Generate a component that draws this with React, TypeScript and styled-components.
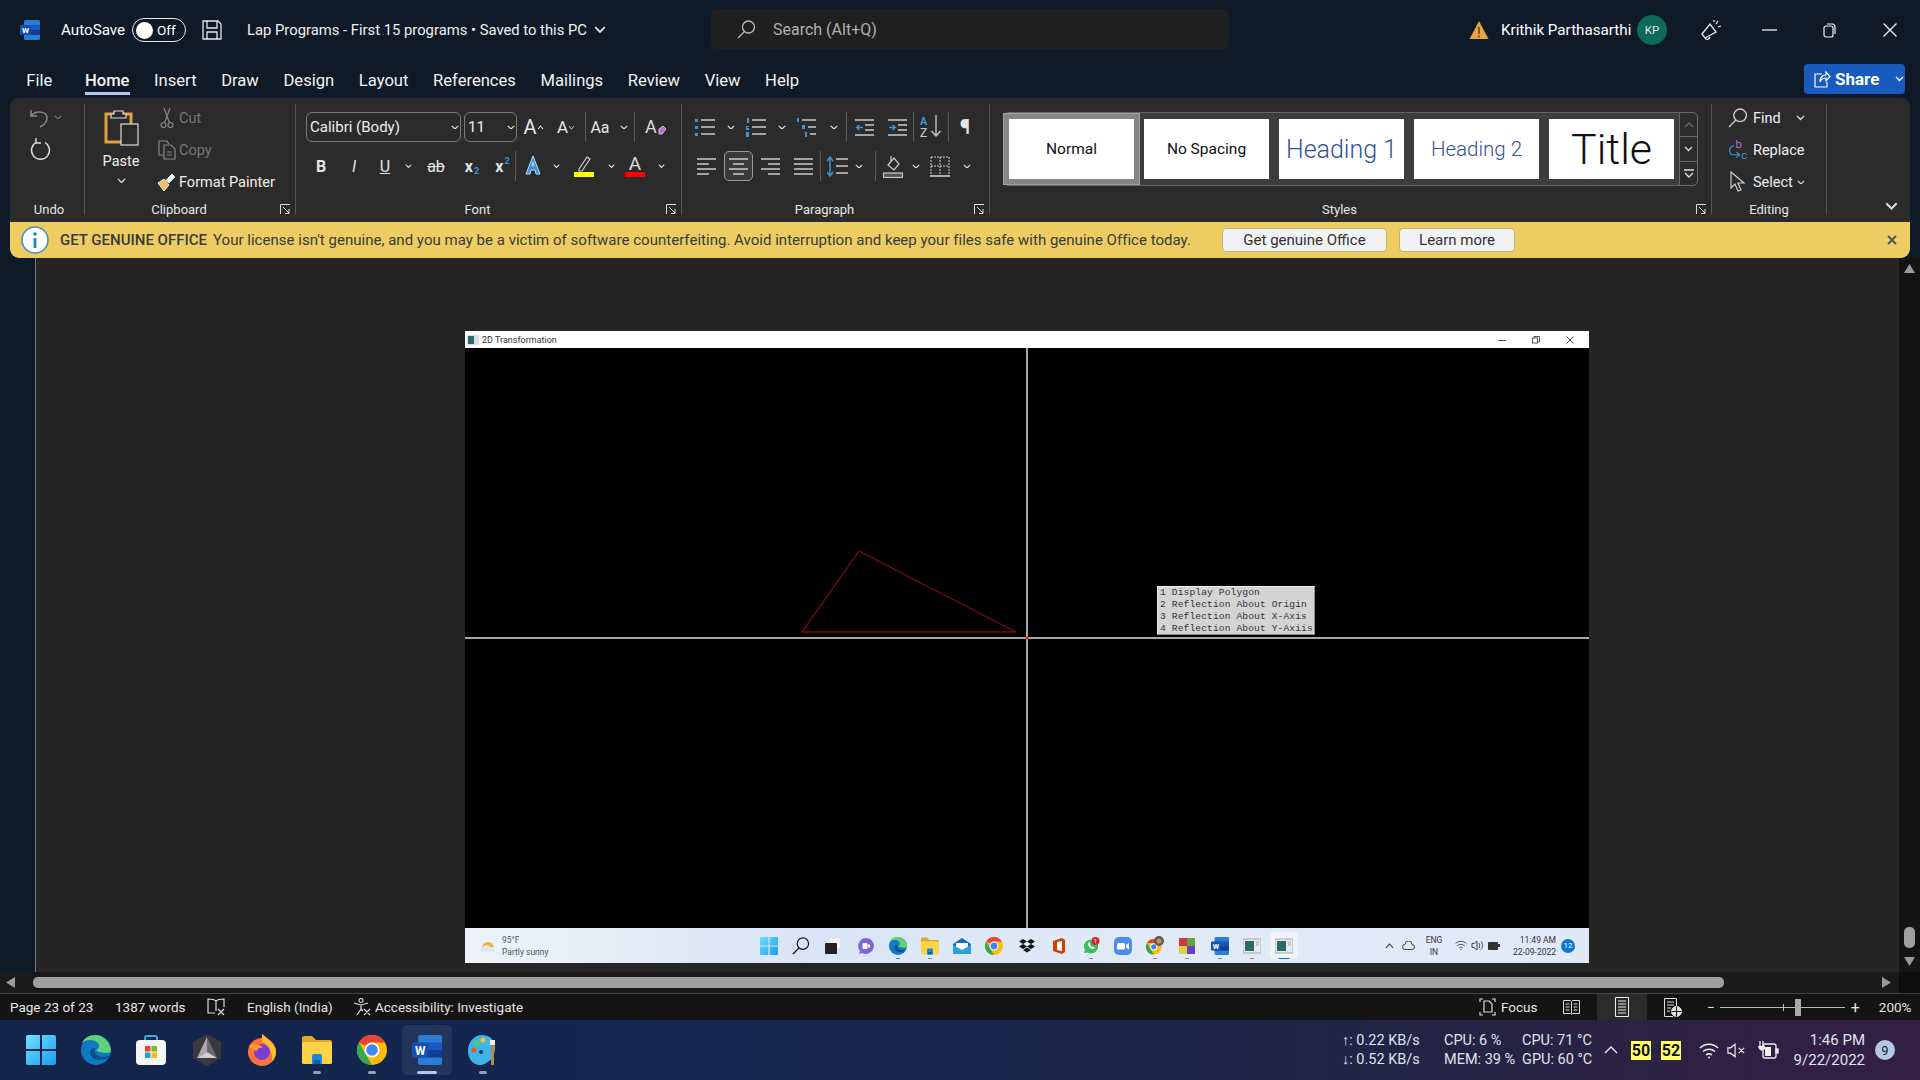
import React from "react";
import styled, { createGlobalStyle } from "styled-components";

const GlobalStyle = createGlobalStyle`
  html, body {
    margin: 0;
    padding: 0;
    width: 1920px;
    height: 1080px;
    overflow: hidden;
    background: #0f1a29;
    font-family: Roboto, "Noto Sans", sans-serif;
  }
  * { box-sizing: border-box; }
`;

const Screen = styled.div`
  width: 1920px;
  height: 1080px;
  display: flex;
  flex-direction: column;
  color: #fff;
`;
const Spacer = styled.span<{ $w: number }>`
  width: ${(p) => p.$w}px;
  flex: none;
  display: flex;
`;

const TitleBar = styled.div`
  height: 60px;
  display: flex;
  align-items: center;
  padding-left: 20px;
  flex: none;
`;
const AutoSave = styled.span`
  font-size: 15.2px;
  margin-left: 21px;
  width: 71px;
`;
const Toggle = styled.div`
  width: 54px;
  height: 24px;
  border: 1.5px solid #e8e8e8;
  border-radius: 12px;
  display: flex;
  align-items: center;
  padding-left: 3px;
  gap: 4px;
  font-size: 13.5px;
  &::before {
    content: "";
    width: 17px;
    height: 17px;
    border-radius: 50%;
    background: #fff;
  }
`;
const DocTitle = styled.span`
  font-size: 14.8px;
  margin-left: 25px;
  width: 364px;
  color: #f0f0f0;
  white-space: nowrap;
  display: flex;
  align-items: center;
  gap: 7px;
`;
const SearchBox = styled.div`
  width: 518px;
  height: 40px;
  margin-left: 100px;
  margin-top: -2px;
  background: #1f1f1f;
  border-radius: 6px;
  display: flex;
  align-items: center;
  padding-left: 26px;
  gap: 17px;
  font-size: 16px;
  color: #b0b0b0;
`;
const TitleRight = styled.div`
  margin-left: 240px;
  display: flex;
  align-items: center;
  flex: 1;
`;
const UserName = styled.span`
  font-size: 15.2px;
  margin-left: 12px;
  width: 136px;
`;
const Avatar = styled.span`
  width: 30px;
  height: 30px;
  border-radius: 50%;
  background: #0b6a58;
  display: flex;
  align-items: center;
  justify-content: center;
  font-size: 11.5px;
  color: #e6e6e6;
`;

const TabBar = styled.div`
  height: 38px;
  flex: none;
  display: flex;
  align-items: flex-start;
  padding-left: 14px;
  position: relative;
`;
const Tab = styled.span<{ $active?: boolean; $gap?: number }>`
  font-size: 16.6px;
  padding: 11px 12.3px 0;
  height: 38px;
  line-height: 20px;
  margin-right: ${(p) => p.$gap || 0}px;
  font-weight: ${(p) => (p.$active ? 500 : 400)};
  color: #f2f2f2;
  position: relative;
  &::after {
    content: "";
    display: ${(p) => (p.$active ? "block" : "none")};
    position: absolute;
    left: 12px;
    right: 12px;
    bottom: 3px;
    height: 3px;
    background: #b4c7e7;
  }
`;
const ShareButton = styled.div`
  position: absolute;
  left: 1804px;
  top: 4px;
  width: 101px;
  height: 30px;
  background: #185abd;
  border-radius: 4px;
  display: flex;
  align-items: center;
  padding-left: 10px;
  gap: 4px;
  font-size: 17px;
  font-weight: 700;
`;

const Ribbon = styled.div`
  margin-left: 10px;
  width: 1900px;
  height: 124px;
  flex: none;
  background: #2b2b2b;
  border-radius: 9px 9px 0 0;
  display: flex;
  padding-top: 6px;
  position: relative;
`;
const Group = styled.div<{ $w: number }>`
  width: ${(p) => p.$w}px;
  height: 111px;
  flex: none;
  border-right: 1px solid #555;
  display: flex;
  flex-direction: column;
  position: relative;
`;
const GroupBody = styled.div<{ $pl?: number }>`
  flex: 1;
  min-height: 0;
  display: flex;
  flex-direction: column;
  padding-left: ${(p) => p.$pl || 0}px;
`;
const GroupLabel = styled.div<{ $pr?: number; $pl?: number }>`
  height: 22px;
  flex: none;
  margin-bottom: -7px;
  line-height: 20px;
  text-align: center;
  font-size: 13px;
  color: #e6e6e6;
  padding: 0 ${(p) => p.$pr || 0}px 0 ${(p) => p.$pl || 0}px;
`;
const Launcher = styled.span`
  position: absolute;
  right: 4px;
  bottom: 0;
  width: 11px;
  height: 11px;
  display: flex;
`;
const ToolRow = styled.div<{ $top: number }>`
  display: flex;
  align-items: center;
  height: 30px;
  margin-top: ${(p) => p.$top}px;
`;
const Tool = styled.span<{
  $w: number;
  $boxed?: boolean;
  $size?: number;
  $bold?: boolean;
  $italic?: boolean;
  $line?: string;
}>`
  width: ${(p) => p.$w}px;
  height: 30px;
  flex: none;
  display: flex;
  align-items: center;
  justify-content: center;
  font-size: ${(p) => p.$size || 16}px;
  font-weight: ${(p) => (p.$bold ? 700 : 400)};
  font-style: ${(p) => (p.$italic ? "italic" : "normal")};
  text-decoration: ${(p) => p.$line || "none"};
  color: #e4e4e4;
  border-radius: 5px;
  border: ${(p) => (p.$boxed ? "1px solid #9a9a9a" : "none")};
  background: ${(p) => (p.$boxed ? "#3a3a3a" : "none")};
`;
const Script = styled.span<{ $up?: boolean }>`
  font-size: 9px;
  color: #3f93d8;
  align-self: ${(p) => (p.$up ? "flex-start" : "flex-end")};
  margin: ${(p) => (p.$up ? "5px" : "0")} 0 ${(p) => (p.$up ? "0" : "5px")} 1px;
`;
const ToolSep = styled.span`
  width: 1px;
  height: 30px;
  background: #5a5a5a;
  flex: none;
`;
const FontBox = styled.div<{ $w: number }>`
  width: ${(p) => p.$w}px;
  height: 30px;
  flex: none;
  border: 1px solid #7a7a7a;
  border-radius: 6px;
  margin-right: 3px;
  display: flex;
  align-items: center;
  justify-content: space-between;
  padding: 0 1px 0 3px;
  font-size: 15px;
  color: #eee;
`;
const UndoColumn = styled.div`
  display: flex;
  flex-direction: column;
  padding: 2px 0 0 20px;
  gap: 9px;
`;
const UndoRow = styled.div`
  display: flex;
  align-items: center;
  gap: 4px;
  height: 22px;
`;
const ClipboardBody = styled.div`
  flex: 1;
  min-height: 0;
  display: flex;
`;
const PasteColumn = styled.div`
  width: 72px;
  display: flex;
  flex-direction: column;
  align-items: center;
  padding: 4px 0 0 0;
  font-size: 14.5px;
  color: #f0f0f0;
`;
const PasteLabel = styled.span`
  margin-top: 5px;
  line-height: 20px;
`;
const PasteChevron = styled.span`
  margin-top: 6px;
  display: flex;
`;
const ClipColumn = styled.div`
  display: flex;
  flex-direction: column;
  margin-top: -2px;
`;
const ClipItem = styled.div<{ $off?: boolean }>`
  display: flex;
  align-items: center;
  height: 32px;
  flex: none;
  font-size: 14.5px;
  color: ${(p) => (p.$off ? "#777" : "#f0f0f0")};
  & > svg {
    width: 20px;
    margin-right: 2px;
    flex: none;
  }
`;
const Gallery = styled.div`
  margin: 8px 0 0 13px;
  width: 695px;
  height: 74px;
  border: 1px solid #666;
  border-radius: 5px;
  background: #3d3d3d;
  display: flex;
  padding: 6px 0 0 5px;
  position: relative;
`;
const StyleCard = styled.div<{
  $size: number;
  $color?: string;
  $light?: boolean;
  $focus?: boolean;
}>`
  width: 125px;
  height: 60px;
  flex: none;
  margin-right: 10px;
  background: #fff;
  display: flex;
  align-items: center;
  justify-content: center;
  font-size: ${(p) => p.$size}px;
  font-weight: ${(p) => (p.$light ? 300 : 400)};
  color: ${(p) => p.$color || "#111"};
  outline: ${(p) => (p.$focus ? "5px solid #868686" : "none")};
  box-shadow: ${(p) => (p.$focus ? "0 0 0 6px #a0a0a0" : "none")};
`;
const Scroller = styled.div`
  position: absolute;
  right: 0;
  top: 0;
  bottom: 0;
  width: 18px;
  background: #2b2b2b;
  border-left: 1px solid #666;
  border-radius: 0 5px 5px 0;
  display: flex;
  flex-direction: column;
`;
const ScrollCell = styled.span`
  flex: 1;
  display: flex;
  align-items: center;
  justify-content: center;
  & + & {
    border-top: 1px solid #666;
  }
`;
const EditColumn = styled.div`
  flex: 1;
  min-height: 0;
  display: flex;
  flex-direction: column;
  margin-top: -2px;
  padding-left: 16px;
`;
const EditItem = styled.div`
  height: 32px;
  flex: none;
  display: flex;
  align-items: center;
  font-size: 14.5px;
  color: #f0f0f0;
  & > svg:first-child {
    width: 20px;
    margin-right: 5px;
    flex: none;
  }
`;
const EditChevron = styled.span<{ $gap: number }>`
  margin-left: ${(p) => p.$gap}px;
  display: flex;
`;
const CollapseButton = styled.span`
  position: absolute;
  right: 12px;
  bottom: 12px;
  display: flex;
`;

const InfoBar = styled.div`
  margin-left: 10px;
  width: 1900px;
  height: 36px;
  flex: none;
  background: #edcd62;
  border-radius: 0 0 9px 9px;
  display: flex;
  align-items: center;
  padding-left: 11px;
  font-size: 15px;
  color: #3a3a3a;
  position: relative;
  z-index: 1;
`;
const InfoBold = styled.b`
  font-weight: 500;
  margin-left: 11px;
  width: 153px;
  flex: none;
  white-space: nowrap;
`;
const InfoText = styled.span`
  width: 1009px;
  flex: none;
  white-space: nowrap;
  letter-spacing: 0.02px;
`;
const InfoButton = styled.span<{ $w: number }>`
  width: ${(p) => p.$w}px;
  height: 24px;
  flex: none;
  margin-right: 12px;
  background: #f2f2f2;
  border: 1px solid #c2b27a;
  border-radius: 4px;
  display: flex;
  align-items: center;
  justify-content: center;
  font-size: 15px;
  color: #333;
`;
const InfoClose = styled.span`
  position: absolute;
  right: 13px;
  top: 13px;
  display: flex;
`;

const Workspace = styled.div`
  height: 714px;
  flex: none;
  display: flex;
`;
const LeftGutter = styled.div`
  width: 36px;
  flex: none;
  border-right: 1px solid #7a7a7a;
`;
const DocArea = styled.div`
  width: 1863px;
  flex: none;
  background: #252525;
  padding: 73px 0 0 429px;
`;
const VScroll = styled.div`
  flex: 1;
  background: #141414;
  position: relative;
  display: flex;
  flex-direction: column;
  align-items: center;
  padding-top: 6px;
`;
const VThumb = styled.span`
  position: absolute;
  left: 5px;
  top: 669px;
  width: 11px;
  height: 21px;
  background: #a0a0a0;
  border-radius: 5px;
`;
const VDown = styled.span`
  position: absolute;
  left: 5px;
  top: 699px;
  display: flex;
`;

const Shot = styled.div`
  width: 1124px;
  height: 632px;
  display: flex;
  flex-direction: column;
`;
const ShotTitle = styled.div`
  height: 17px;
  background: #fff;
  color: #333;
  font-size: 9px;
  display: flex;
  align-items: center;
  padding-left: 2px;
  gap: 3px;
`;
const ShotControls = styled.span`
  margin-left: auto;
  display: flex;
  gap: 26px;
  padding-right: 15px;
`;
const Canvas = styled.div`
  flex: 1;
  background: #000;
  position: relative;
`;
const AxisV = styled.span`
  position: absolute;
  left: 561px;
  top: 0;
  bottom: 0;
  width: 1.5px;
  background: #a8a8a8;
`;
const AxisH = styled.span`
  position: absolute;
  left: 0;
  right: 0;
  top: 289px;
  height: 1.5px;
  background: #a8a8a8;
`;
const Plot = styled.svg`
  position: absolute;
  left: 0;
  top: 0;
`;
const GlutMenu = styled.div`
  position: absolute;
  left: 692px;
  top: 238px;
  width: 158px;
  height: 49px;
  background: #d4d4d4;
  border: 1px solid #eee;
  border-right-color: #888;
  border-bottom-color: #888;
  padding: 0 2px;
  font-family: "Liberation Mono", monospace;
  font-size: 9.6px;
  line-height: 12px;
  letter-spacing: 0.12px;
  color: #333;
  white-space: pre;
`;
const ShotTaskbar = styled.div`
  height: 35px;
  flex: none;
  background: linear-gradient(90deg, #eef3f9, #d9e5f6 30%, #e1eaf7 60%, #dfe9f8);
  display: flex;
  align-items: center;
  position: relative;
  color: #333;
  font-size: 8.5px;
`;
const Weather = styled.div`
  width: 290px;
  flex: none;
  display: flex;
  align-items: center;
  padding-left: 15px;
  gap: 6px;
`;
const WeatherText = styled.div`
  line-height: 12px;
  color: #555;
`;
const ShotIcons = styled.div`
  display: flex;
  width: 627px;
  flex: none;
`;
const ShotIcon = styled.span<{ $active?: boolean; $run?: boolean }>`
  width: 28px;
  height: 27px;
  margin-right: 4.2px;
  flex: none;
  display: flex;
  align-items: center;
  justify-content: center;
  border-radius: 3px;
  position: relative;
  background: ${(p) => (p.$active ? "#f0f4fa" : "none")};
  & > svg {
    width: 18px;
    height: 18px;
  }
  &::after {
    content: "";
    display: ${(p) => (p.$run || p.$active ? "block" : "none")};
    position: absolute;
    bottom: 0;
    left: 50%;
    transform: translateX(-50%);
    width: ${(p) => (p.$active ? 11 : 4)}px;
    height: 1.5px;
    background: ${(p) => (p.$active ? "#0a78d4" : "#888")};
  }
`;
const Tray = styled.div`
  flex: 1;
  display: flex;
  align-items: center;
  padding-left: 3px;
`;
const TrayLang = styled.span`
  text-align: center;
  line-height: 12px;
  width: 30px;
  margin: 0 6px 0 4px;
`;
const TrayClock = styled.span`
  width: 56px;
  text-align: right;
  line-height: 12px;
`;
const TrayBadge = styled.span`
  width: 14px;
  height: 14px;
  border-radius: 50%;
  background: #0a78d4;
  color: #fff;
  font-size: 8px;
  display: flex;
  align-items: center;
  justify-content: center;
  margin-left: 5px;
`;

const HScroll = styled.div`
  height: 21px;
  flex: none;
  background: #1a1a1a;
  display: flex;
  align-items: center;
  padding-left: 6px;
`;
const HThumb = styled.span`
  width: 1691px;
  height: 11px;
  margin-left: 18px;
  background: #a0a0a0;
  border-radius: 5px;
`;
const HRightArrow = styled.span`
  margin-left: 158px;
  display: flex;
`;
const ScrollCorner = styled.span`
  margin-left: auto;
  width: 21px;
  height: 21px;
  background: #0d0d0d;
`;

const StatusBar = styled.div`
  height: 27px;
  flex: none;
  background: #141414;
  border-top: 1px solid #444;
  display: flex;
  align-items: center;
  padding-left: 10px;
  font-size: 13.5px;
  color: #e4e4e4;
  white-space: nowrap;
`;
const StatusText = styled.span<{ $w: number }>`
  width: ${(p) => p.$w}px;
  flex: none;
`;
const StatusIcon = styled.span<{ $w: number; $active?: boolean }>`
  width: ${(p) => p.$w}px;
  height: 26px;
  flex: none;
  display: flex;
  align-items: center;
  justify-content: center;
  background: ${(p) => (p.$active ? "#2b2b2b" : "none")};
`;
const ZoomSlider = styled.span`
  width: 125px;
  height: 1px;
  background: #bbb;
  position: relative;
  flex: none;
  margin: 0 6px 0 5px;
`;
const ZoomTick = styled.span`
  position: absolute;
  left: 63px;
  top: -3px;
  width: 1px;
  height: 7px;
  background: #bbb;
`;
const ZoomThumb = styled.span`
  position: absolute;
  left: 75px;
  top: -8px;
  width: 6px;
  height: 17px;
  background: #a8a8a8;
`;
const ZoomPlus = styled.span`
  font-size: 16px;
`;
const ZoomValue = styled.span`
  margin-left: 19px;
`;

const Taskbar = styled.div`
  height: 60px;
  flex: none;
  background: linear-gradient(90deg, #13254a 0%, #142650 30%, #1b2548 60%, #2b2244 85%, #341f45 100%);
  display: flex;
  align-items: center;
  padding-left: 16px;
  font-size: 14.5px;
  color: #dfe3ea;
`;
const PinnedApps = styled.div`
  display: flex;
  width: 1326px;
  flex: none;
`;
const TaskApp = styled.span<{ $active?: boolean; $run?: boolean }>`
  width: 50px;
  height: 50px;
  margin-right: 5.2px;
  flex: none;
  display: flex;
  align-items: center;
  justify-content: center;
  border-radius: 5px;
  position: relative;
  background: ${(p) => (p.$active ? "rgba(255,255,255,0.07)" : "none")};
  &::after {
    content: "";
    display: ${(p) => (p.$run || p.$active ? "block" : "none")};
    position: absolute;
    bottom: 1px;
    left: 50%;
    transform: translateX(-50%);
    width: ${(p) => (p.$active ? 20 : 8)}px;
    height: 3.5px;
    border-radius: 2px;
    background: ${(p) => (p.$active ? "#b4c7e7" : "#9aa1ae")};
  }
`;
const MeterBlock = styled.div<{ $w: number }>`
  width: ${(p) => p.$w}px;
  flex: none;
  line-height: 19.5px;
  white-space: nowrap;
`;
const Caret = styled.span`
  margin-right: 13px;
  display: flex;
`;
const Temp = styled.span`
  width: 20px;
  height: 19px;
  background: #ffff66;
  color: #111;
  font-size: 16px;
  font-weight: 700;
  display: flex;
  align-items: center;
  justify-content: center;
  margin-right: 10px;
  flex: none;
`;
const ClockBlock = styled.div`
  width: 100px;
  margin-left: -26px;
  flex: none;
  text-align: right;
  line-height: 20px;
  font-size: 15px;
`;
const NotifyBadge = styled.span`
  width: 20px;
  height: 20px;
  border-radius: 50%;
  background: #b4c7e7;
  color: #223;
  font-size: 13px;
  display: flex;
  align-items: center;
  justify-content: center;
  margin-left: 10px;
  flex: none;
`;
const TrayIconSlot = styled.span<{ $w: number }>`
  width: ${(p) => p.$w}px;
  display: flex;
  justify-content: center;
  flex: none;
`;

/* little drawings */
const Chevron = ({ s = 8, c = "#e0e0e0" }: { s?: number; c?: string }) => (
  <svg width={s} height={s * 0.6} viewBox="0 0 10 6" fill="none">
    <path d="M1 1l4 4 4-4" stroke={c} strokeWidth="1.5" />
  </svg>
);

const SizeCaret = ({ down }: { down?: boolean }) => (
  <svg width="7" height="5" viewBox="0 0 7 5" fill="none" stroke={down ? "#7fb4e0" : "#ddd"} strokeWidth="1.1">
    <path d={down ? "M1 1l2.5 3L6 1" : "M1 4l2.5-3L6 4"} />
  </svg>
);

const LauncherIcon = () => (
  <svg width="11" height="11" viewBox="0 0 11 11" fill="none" stroke="#ddd">
    <path d="M.5 10V.5H10M3 3l6 6M9 5v4.5H5" />
  </svg>
);

const WordLogo = ({ s = 20 }: { s?: number }) => (
  <svg width={s} height={s} viewBox="0 0 20 20">
    <rect x="4" width="16" height="20" rx="1.5" fill="#2b7cd3" />
    <rect x="4" y="5" width="16" height="5" fill="#185abd" />
    <rect x="4" y="10" width="16" height="5" fill="#103f91" />
    <rect x="0" y="5" width="11" height="10" rx="1" fill="#1551b5" />
    <text x="5.5" y="13" fontSize="8" fontWeight="700" fill="#fff" textAnchor="middle" fontFamily="Roboto">W</text>
  </svg>
);

const SaveIcon = () => (
  <svg width="20" height="20" viewBox="0 0 20 20" fill="none" stroke="#e6e6e6" strokeWidth="1.3">
    <path d="M1 1h15l3 3v15H1zM5 1v7h10V1M5 19v-7h10v7" />
  </svg>
);

const SearchGlyph = ({ c = "#bbb", s = 19 }: { c?: string; s?: number }) => (
  <svg width={s} height={s} viewBox="0 0 19 19" fill="none" stroke={c} strokeWidth="1.3">
    <circle cx="11.5" cy="7" r="6" />
    <path d="M7.5 11.5L1 18" />
  </svg>
);

const Warning = () => (
  <svg width="20" height="20" viewBox="0 0 20 20">
    <path d="M10 1l9.5 18H.5z" fill="#e8a33d" />
    <path d="M10 7v7M10 15.5v2" stroke="#5a3a10" strokeWidth="1.4" />
  </svg>
);

const Megaphone = () => (
  <svg width="21" height="22" viewBox="0 0 21 22" fill="none" stroke="#eee" strokeWidth="1.3">
    <path d="M1 15l8-10 6 8-11 6zM4 19c1 2 4 2 5-1M15 5l2-3M17 8l3-1M13 3l0-2" />
  </svg>
);

const MinimizeIcon = () => (
  <svg width="15" height="2" viewBox="0 0 15 2">
    <path d="M0 1h15" stroke="#eee" strokeWidth="1.3" />
  </svg>
);
const RestoreIcon = () => (
  <svg width="13" height="15" viewBox="0 0 13 15" fill="none" stroke="#eee" strokeWidth="1.2">
    <rect x="1" y="3" width="9" height="11" rx="2" />
    <path d="M4 1h5a3 3 0 0 1 3 3v7" />
  </svg>
);
const CloseIcon = () => (
  <svg width="14" height="14" viewBox="0 0 14 14" stroke="#eee" strokeWidth="1.3">
    <path d="M.5.5l13 13M13.5.5l-13 13" />
  </svg>
);

const ShareIcon = () => (
  <svg width="17" height="18" viewBox="0 0 17 18" fill="none" stroke="#fff" strokeWidth="1.2">
    <path d="M8 4H1v13h12v-5M6 12c0-5 3-7 6-7V2l4 4.5L12 11V8c-3 0-5 1-6 4z" />
  </svg>
);

const UndoIcon = () => (
  <svg width="20" height="21" viewBox="0 0 20 21" fill="none" stroke="#888" strokeWidth="1.5">
    <path d="M1 3v6h6M1 9c5-6 16-5 16 2 0 4-3 7-7 9" />
  </svg>
);
const RedoIcon = () => (
  <svg width="21" height="23" viewBox="0 0 21 23" fill="none" stroke="#ddd" strokeWidth="1.4">
    <path d="M6 1v5h5M6 5.500A9 9 0 1 0 15 5.500" />
  </svg>
);

const PasteIcon = () => (
  <svg width="35" height="39" viewBox="0 0 35 39" fill="none">
    <path d="M2 6h25v28H2z" stroke="#e0a040" strokeWidth="3" />
    <path d="M10 6V3h9v3h3v4H7V6z" fill="#2b2b2b" stroke="#ddd" strokeWidth="1.2" />
    <rect x="17" y="16" width="17" height="21" fill="#2b2b2b" stroke="#ddd" strokeWidth="1.2" />
  </svg>
);
const CutIcon = () => (
  <svg width="14" height="22" viewBox="0 0 14 22" fill="none" stroke="#888" strokeWidth="1.2">
    <circle cx="3.5" cy="18" r="2.5" />
    <circle cx="10.5" cy="18" r="2.5" />
    <path d="M4.5 16L10 1M9.5 16L4 1" />
  </svg>
);
const CopyIcon = () => (
  <svg width="18" height="20" viewBox="0 0 18 20" fill="none" stroke="#888" strokeWidth="1.2">
    <path d="M5 15H1V1h8l2 3M6 5h7l4 4v10H6zM9 12h5M9 15h5" />
  </svg>
);
const BrushIcon = () => (
  <svg width="20" height="20" viewBox="0 0 20 20" fill="none">
    <path d="M1 11l6-4 5 6-5 6z" fill="#f0c060" stroke="#eee" />
    <path d="M9 8l6-6 3 3-6 6z" fill="#f4f4f4" stroke="#ddd" />
  </svg>
);

const ClearFormat = () => (
  <svg width="21" height="24" viewBox="0 0 21 24" fill="none" overflow="visible">
    <text x="0" y="18" fontSize="18" fill="#ddd" fontFamily="Roboto">A</text>
    <path d="M14 14l4-3 3 3-4 5h-3z" fill="#c070c8" stroke="#e0b0e8" />
  </svg>
);

const BulletLines = ({ kind }: { kind: "dot" | "num" | "multi" }) => (
  <svg width="20" height="20" viewBox="0 0 20 20" fill="none">
    {kind === "dot" && <path d="M0 2h3v3H0zM0 9h3v3H0zM0 16h3v3H0z" fill="#3f93d8" />}
    {kind === "num" && <path d="M1 1h2v5H1zM0 9h3v1H1v1h2v2H0zM0 15h3v5H0z" fill="#3f93d8" />}
    {kind === "multi" && <path d="M0 1h2v4H0zM5 8h3v4H5zM8 15h2v5H8z" fill="#3f93d8" />}
    <path
      d={kind === "multi" ? "M5 3h14M11 10h8M13 17h6" : "M6 3h14M6 10h14M6 17h14"}
      stroke="#ccc"
      strokeWidth="1.6"
    />
  </svg>
);
const IndentIcon = ({ inward }: { inward?: boolean }) => (
  <svg width="19" height="19" viewBox="0 0 19 19" fill="none">
    <path d="M0 2h19M10 7h9M10 12h9M0 17h19" stroke="#ccc" strokeWidth="1.6" />
    <path d={inward ? "M1 9.500h6M4.500 7l3 2.500-3 2.500" : "M8 9.500H2M4.500 7l-3 2.500 3 2.500"} stroke="#3f93d8" strokeWidth="1.5" />
  </svg>
);
const SortIcon = () => (
  <svg width="22" height="26" viewBox="0 0 22 26" fill="none" overflow="visible">
    <text x="0" y="11" fontSize="11" fontWeight="700" fill="#3f93d8" fontFamily="Roboto">A</text>
    <text x="0" y="23" fontSize="12" fill="#ccc" fontFamily="Roboto">Z</text>
    <path d="M16 1v21M11.500 17l4.500 5 4.500-5" stroke="#ccc" strokeWidth="1.3" />
  </svg>
);
const AlignIcon = ({ mode }: { mode: "l" | "c" | "r" | "j" }) => {
  const paths = {
    l: "M0 2h19M0 7h12M0 12h19M0 17h12",
    c: "M0 2h19M4 7h11M0 12h19M4 17h11",
    r: "M0 2h19M7 7h12M0 12h19M7 17h12",
    j: "M0 2h19M0 7h19M0 12h19M0 17h19",
  };
  return (
    <svg width="19" height="19" viewBox="0 0 19 19" fill="none">
      <path d={paths[mode]} stroke="#ccc" strokeWidth="1.6" />
    </svg>
  );
};
const SpacingIcon = () => (
  <svg width="21" height="21" viewBox="0 0 21 21" fill="none">
    <path d="M3 1v19M0 5l3-4 3 4M0 16l3 4 3-4" stroke="#3f93d8" strokeWidth="1.5" />
    <path d="M9 3h12M9 10h12M9 17h12" stroke="#ccc" strokeWidth="1.6" />
  </svg>
);
const ShadingIcon = () => (
  <svg width="20" height="23" viewBox="0 0 20 23" fill="none" stroke="#ccc" strokeWidth="1.2">
    <path d="M5 10l6-7 5 6-5 6zM8 1v5" />
    <rect x="0.5" y="18" width="19" height="4.5" fill="#555" />
  </svg>
);
const BordersIcon = () => (
  <svg width="20" height="21" viewBox="0 0 20 21" fill="none" stroke="#ccc" strokeDasharray="2 1">
    <path d="M1 1h18v19M1 1v19M10 1v19M1 10h18" />
    <path d="M0 20h20" strokeDasharray="none" strokeWidth="1.6" />
  </svg>
);
const FontColorA = ({ bar, outline }: { bar?: string; outline?: boolean }) => (
  <svg width="20" height="24" viewBox="0 0 20 24" overflow="visible">
    {outline ? (
      <path d="M3 20L10 2l7 18h-4l-1-4H8l-1 4zM9 12h2l-1-4z" fill="#3c8ed8" stroke="#bcdcf4" strokeWidth="1" />
    ) : (
      <text x="10" y="16" fontSize="19" fill="#ddd" textAnchor="middle" fontFamily="Roboto">A</text>
    )}
    {bar && <rect x="0" y="18" width="20" height="5" fill={bar} />}
  </svg>
);
const HighlightIcon = () => (
  <svg width="20" height="24" viewBox="0 0 20 24" fill="none">
    <path d="M5 15l8-12 3 2-8 12-3 0z" stroke="#ccc" strokeWidth="1.2" />
    <rect x="0" y="18" width="20" height="5" fill="#ffff00" />
  </svg>
);
const ReplaceIcon = () => (
  <svg width="21" height="24" viewBox="0 0 21 24" fill="none" overflow="visible">
    <text x="8" y="10" fontSize="12" fill="#b870c8" fontFamily="Roboto">b</text>
    <text x="14" y="21" fontSize="12" fill="#3f93d8" fontFamily="Roboto">c</text>
    <path d="M6 8C1 8 0 16 5 17h7M9 14l3 3-3 3" stroke="#3f93d8" strokeWidth="1.2" />
  </svg>
);
const CursorIcon = () => (
  <svg width="20" height="22" viewBox="0 0 20 22" fill="none">
    <path d="M3 1v16l4-4 3 7 3-1-3-7h6z" stroke="#ccc" strokeWidth="1.2" />
  </svg>
);

const BookCross = () => (
  <svg width="19" height="18" viewBox="0 0 19 18" fill="none" stroke="#ddd" strokeWidth="1.2">
    <path d="M9 3C7 1 3 1 1 1v14h7M9 3c2-2 5-2 8-2v8M9 3v10M11 11l6 6M17 11l-6 6" />
  </svg>
);
const AccessIcon = () => (
  <svg width="19" height="18" viewBox="0 0 19 18" fill="none" stroke="#ddd" strokeWidth="1.2">
    <circle cx="8" cy="2.500" r="2" />
    <path d="M1 5l7 2 7-2M8 7v4l-4 6M8 11l2 2M11 11l6 6M17 11l-6 6" />
  </svg>
);
const FocusIcon = () => (
  <svg width="17" height="18" viewBox="0 0 17 18" fill="none" stroke="#ddd" strokeWidth="1.2">
    <path d="M1 4V1h3M13 1h3v3M16 14v3h-3M4 17H1v-3M5 14V3h5l3 3v8z" />
  </svg>
);
const ReadIcon = () => (
  <svg width="17" height="16" viewBox="0 0 17 16" fill="none" stroke="#ddd">
    <path d="M.5 1.500h7l1 1 1-1h7v13h-7l-1 1-1-1h-7zM8.500 2.500v12M2.500 5h4M2.500 8h4M2.500 11h4M10.500 5h4M10.500 8h4M10.500 11h4" />
  </svg>
);
const PrintIcon = () => (
  <svg width="14" height="20" viewBox="0 0 14 20" fill="none" stroke="#eee">
    <path d="M.5.5h13v19H.5zM3 4h8M3 7h8M3 10h8M3 13h8M3 16h8" />
  </svg>
);
const WebIcon = () => (
  <svg width="18" height="19" viewBox="0 0 18 19" fill="none" stroke="#ddd">
    <path d="M9 18.500H.5V.5h12v8M3 4h7M3 7h7M3 10h4M3 13h3" />
    <circle cx="12.500" cy="13.500" r="5" fill="#ddd" />
    <path d="M7.500 13.500h10M12.500 8.500v10" stroke="#141414" />
  </svg>
);

/* taskbar logos */
const WinLogo = ({ s = 30 }: { s?: number }) => (
  <svg width={s} height={s} viewBox="0 0 30 30">
    <defs>
      <linearGradient id="winl" x1="0" y1="0" x2="1" y2="1">
        <stop offset="0" stopColor="#6fe0ff" />
        <stop offset="1" stopColor="#1a9df0" />
      </linearGradient>
    </defs>
    <path d="M0 2a2 2 0 0 1 2-2h12v14H0zM16 0h12a2 2 0 0 1 2 2v12H16zM0 16h14v14H2a2 2 0 0 1-2-2zM16 16h14v12a2 2 0 0 1-2 2H16z" fill="url(#winl)" />
  </svg>
);
const EdgeLogo = ({ s = 30 }: { s?: number }) => (
  <svg width={s} height={s} viewBox="0 0 30 30">
    <circle cx="15" cy="15" r="15" fill="#0f79c4" />
    <path d="M30 17C30 6 21 0 14 0 8 0 3 3 1 8c4-4 12-4 16 0 2 3 1 6-2 7 4 4 15 3 15 2z" fill="#5ed17a" />
    <path d="M9 17c0 4 4 8 9 8 5 0 9-2 11-5-3 2-9 3-13 0-3-2-3-5-1-7-3 0-6 1-6 4z" fill="#0a4f8a" />
  </svg>
);
const StoreLogo = ({ s = 30 }: { s?: number }) => (
  <svg width={s} height={s} viewBox="0 0 30 30">
    <path d="M9 7V3a2 2 0 0 1 2-2h8a2 2 0 0 1 2 2v4" fill="none" stroke="#2bb3e8" strokeWidth="2" />
    <rect y="5" width="30" height="25" rx="4" fill="#f5f5f5" />
    <rect x="9" y="11" width="5.500" height="5.500" fill="#e8472b" />
    <rect x="15.500" y="11" width="5.500" height="5.500" fill="#7cbb30" />
    <rect x="9" y="17.500" width="5.500" height="5.500" fill="#1aa2e8" />
    <rect x="15.500" y="17.500" width="5.500" height="5.500" fill="#fbbb10" />
  </svg>
);
const HexLogo = () => (
  <svg width="28" height="32" viewBox="0 0 28 32">
    <path d="M14 0l14 8v16l-14 8L0 24V8z" fill="#3a3a3e" />
    <path d="M14 3L4 24l10-6z" fill="#a8a8ae" />
    <path d="M14 3l10 21-10-6z" fill="#6a6a70" />
    <path d="M4 24h20l-10-6z" fill="#cfcfd4" />
  </svg>
);
const FoxLogo = () => (
  <svg width="30" height="32" viewBox="0 0 30 32">
    <circle cx="15" cy="18" r="14" fill="#ff7139" />
    <path d="M15 0c5 4 14 10 14 18 0 4-2 8-4 9 1-8-3-16-10-19z" fill="#ffbd2e" />
    <circle cx="15" cy="18" r="8" fill="#7a3fd0" />
    <path d="M2 12c4-3 12-2 14 2-4-1-6 1-6 3l-4-1z" fill="#ff9a2e" />
  </svg>
);
const FolderLogo = ({ s = 30 }: { s?: number }) => (
  <svg width={s} height={s} viewBox="0 0 30 30">
    <path d="M0 3a2 2 0 0 1 2-2h8l4 4h14a2 2 0 0 1 2 2v3H0z" fill="#e0a82a" />
    <rect y="7" width="30" height="22" rx="1.5" fill="#fdd247" />
    <path d="M10 29v-8a2 2 0 0 1 2-2h6a2 2 0 0 1 2 2v8z" fill="#1a8ad4" />
    <rect x="12" y="25" width="6" height="4" fill="#0c5ea8" />
  </svg>
);
const ChromeLogo = ({ s = 30 }: { s?: number }) => (
  <svg width={s} height={s} viewBox="0 0 30 30">
    <circle cx="15" cy="15" r="15" fill="#fbbc05" />
    <path d="M15 0a15 15 0 0 1 13 7.500H15A7.500 7.500 0 0 0 8.500 11L2 7.500A15 15 0 0 1 15 0z" fill="#ea4335" />
    <path d="M2 7.500L8.500 19 15 30A15 15 0 0 1 2 7.500z" fill="#34a853" />
    <circle cx="15" cy="15" r="7.500" fill="#fff" />
    <circle cx="15" cy="15" r="5.800" fill="#4285f4" />
  </svg>
);
const PaletteLogo = () => (
  <svg width="30" height="32" viewBox="0 0 30 32">
    <path d="M14 1c8 0 14 6 13 15-1 8-8 15-15 15C5 31 0 25 0 17 0 8 6 1 14 1z" fill="#3fb4e8" />
    <circle cx="9" cy="9" r="2.500" fill="#6bc44f" />
    <circle cx="15" cy="6" r="2.500" fill="#f5c32c" />
    <circle cx="6" cy="16" r="2.500" fill="#e8562c" />
    <circle cx="13" cy="18" r="2" fill="#16405e" />
    <path d="M22 10h5l-1 7v14h-3V17z" fill="#b08a4a" />
    <path d="M22 6h5v5h-5z" fill="#eee" />
  </svg>
);

const ChatLogo = () => (
  <svg viewBox="0 0 18 18">
    <path d="M9 1a8 8 0 1 1-4 15l-3 1 1-3A8 8 0 0 1 9 1z" fill="#7b68d8" />
    <rect x="5.500" y="6" width="5" height="6" rx="1" fill="#fff" />
    <path d="M11 8l2-1v4l-2-1z" fill="#fff" />
  </svg>
);
const TaskView = () => (
  <svg viewBox="0 0 18 18">
    <rect x="5" y="1" width="12" height="11" rx="1" fill="#f4f4f4" stroke="#ddd" />
    <rect x="1" y="6" width="12" height="11" rx="1" fill="#222" />
  </svg>
);
const MailLogo = () => (
  <svg viewBox="0 0 18 18">
    <path d="M9 1l9 6v10H0V7z" fill="#0f6cbd" />
    <path d="M3 6h12v5l-6 3-6-3z" fill="#fff" />
    <path d="M0 8l9 5 9-5v9H0z" fill="#2b9fe0" />
  </svg>
);
const DropboxLogo = () => (
  <svg viewBox="0 0 18 18">
    <path d="M5 2l4 2.500-4 2.500-4-2.500zM13 2l4 2.500-4 2.500-4-2.500zM5 7l4 2.500L5 12 1 9.500zM13 7l4 2.500-4 2.500-4-2.500zM5 13l4-2.500 4 2.500-4 2.500z" fill="#111" />
  </svg>
);
const OfficeLogo = () => (
  <svg viewBox="0 0 18 18">
    <path d="M3 4l9-3 3 2v12l-3 2-9-3z" fill="#d83b01" />
    <path d="M7 5l5-1v10l-5-1z" fill="#fff" />
  </svg>
);
const WhatsLogo = () => (
  <svg viewBox="0 0 18 18" overflow="visible">
    <path d="M9 2a7.500 7.500 0 1 1-3.500 14L1 17l1.200-4A7.500 7.500 0 0 1 9 2z" fill="#32c15c" stroke="#fff" />
    <path d="M6 6c0 4 3 6 6 6l1-1.500-2-1-1 .5-2-2 .5-1-1-2z" fill="#fff" />
    <circle cx="13.500" cy="4" r="4" fill="#e0212f" />
    <text x="13.500" y="6.300" fontSize="6" fill="#fff" textAnchor="middle" fontFamily="Roboto">1</text>
  </svg>
);
const ZoomLogo = () => (
  <svg viewBox="0 0 18 18">
    <rect width="18" height="18" rx="5" fill="#4a8cf0" />
    <rect x="3" y="6" width="8" height="6.500" rx="1.500" fill="#fff" />
    <path d="M12 8l3-2v6.500l-3-2z" fill="#fff" />
  </svg>
);
const ColorBlocks = () => (
  <svg viewBox="0 0 18 18">
    <rect x="1" y="1" width="8" height="8" fill="#d8323a" />
    <rect x="9" y="1" width="8" height="8" fill="#5da83c" />
    <rect x="1" y="9" width="8" height="8" fill="#e0d03c" />
    <rect x="9" y="9" width="8" height="8" fill="#6a3cc0" />
  </svg>
);
const WindowThumb = () => (
  <svg viewBox="0 0 18 18">
    <rect y="2" width="18" height="14" fill="#e8ecef" stroke="#aaa" />
    <rect x="2" y="4" width="9" height="10" fill="#2a6a68" />
    <rect x="13" y="4" width="3" height="5" fill="#ccc" />
  </svg>
);
const ChromeUser = () => (
  <svg viewBox="0 0 18 18" overflow="visible">
    <g transform="translate(0 2) scale(0.52)">
      <circle cx="15" cy="15" r="15" fill="#fbbc05" />
      <path d="M15 0a15 15 0 0 1 13 7.500H15L2 7.500A15 15 0 0 1 15 0z" fill="#ea4335" />
      <path d="M2 7.500L15 30A15 15 0 0 1 2 7.500z" fill="#34a853" />
      <circle cx="15" cy="15" r="6" fill="#4285f4" stroke="#fff" strokeWidth="2" />
    </g>
    <circle cx="13" cy="4" r="5" fill="#6a5a50" />
    <circle cx="13" cy="4" r="2.500" fill="#c09070" />
  </svg>
);
const SunCloud = () => (
  <svg width="16" height="14" viewBox="0 0 16 14">
    <path d="M2 9a6 6 0 0 1 12 0z" fill="#f0b030" />
    <path d="M1 13a3 3 0 0 1 2-5 4 4 0 0 1 7 0h3a2.500 2.500 0 0 1 0 5z" fill="#dfe6ee" />
  </svg>
);
const WifiIcon = ({ c = "#eee", s = 20 }: { c?: string; s?: number }) => (
  <svg width={s} height={s * 0.85} viewBox="0 0 20 17" fill="none" stroke={c} strokeWidth="1.5">
    <path d="M1 6c5-5 13-5 18 0M4 9.500c3.500-3 8.500-3 12 0M7 13c2-1.500 4-1.500 6 0" />
    <circle cx="10" cy="15.500" r="1" fill={c} stroke="none" />
  </svg>
);
const MuteIcon = () => (
  <svg width="20" height="17" viewBox="0 0 20 17" fill="none" stroke="#eee" strokeWidth="1.3">
    <path d="M1 5.500h3l5-4v14l-5-4H1zM13 5.500l6 6M19 5.500l-6 6" />
  </svg>
);
const BatteryIcon = () => (
  <svg width="21" height="20" viewBox="0 0 21 20" fill="none" stroke="#eee" strokeWidth="1.3">
    <rect x="5" y="4" width="13" height="14" rx="2" />
    <rect x="18" y="9" width="2" height="4" fill="#eee" />
    <path d="M2 1v5M5 1v5" />
    <path d="M0 6h7v3l-3 2-3-2z" fill="#eee" stroke="none" />
    <rect x="7" y="7" width="6" height="9" fill="#eee" stroke="none" />
  </svg>
);

const menuLines = [
  "1 Display Polygon",
  "2 Reflection About Origin",
  "3 Reflection About X-Axis",
  "4 Reflection About Y-Axiis",
];

const shotIcons: { icon: React.ReactNode; run?: boolean; active?: boolean }[] = [
  { icon: <WinLogo s={18} /> },
  { icon: <SearchGlyph c="#111" s={17} /> },
  { icon: <TaskView /> },
  { icon: <ChatLogo /> },
  { icon: <EdgeLogo s={18} />, run: true },
  { icon: <FolderLogo s={18} />, run: true },
  { icon: <MailLogo /> },
  { icon: <ChromeLogo s={18} /> },
  { icon: <DropboxLogo /> },
  { icon: <OfficeLogo /> },
  { icon: <WhatsLogo />, run: true },
  { icon: <ZoomLogo /> },
  { icon: <ChromeUser />, run: true },
  { icon: <ColorBlocks />, run: true },
  { icon: <WordLogo s={18} />, run: true },
  { icon: <WindowThumb />, run: true },
  { icon: <WindowThumb />, active: true },
];

export default function App() {
  return (
    <Screen>
      <GlobalStyle />
      <TitleBar>
        <WordLogo />
        <AutoSave>AutoSave</AutoSave>
        <Toggle>Off</Toggle>
        <Spacer $w={16} />
        <SaveIcon />
        <DocTitle>
          Lap Programs - First 15 programs • Saved to this PC
          <Chevron s={12} />
        </DocTitle>
        <SearchBox>
          <SearchGlyph />
          Search (Alt+Q)
        </SearchBox>
        <TitleRight>
          <Warning />
          <UserName>Krithik Parthasarthi</UserName>
          <Avatar>KP</Avatar>
          <Spacer $w={34} />
          <Megaphone />
          <Spacer $w={40} />
          <MinimizeIcon />
          <Spacer $w={46} />
          <RestoreIcon />
          <Spacer $w={47} />
          <CloseIcon />
        </TitleRight>
      </TitleBar>

      <TabBar>
        <Tab $gap={8}>File</Tab>
        <Tab $active>Home</Tab>
        <Tab>Insert</Tab>
        <Tab>Draw</Tab>
        <Tab>Design</Tab>
        <Tab>Layout</Tab>
        <Tab>References</Tab>
        <Tab>Mailings</Tab>
        <Tab>Review</Tab>
        <Tab>View</Tab>
        <Tab>Help</Tab>
        <ShareButton>
          <ShareIcon />
          Share
          <Spacer $w={8} />
          <Chevron s={9} c="#fff" />
        </ShareButton>
      </TabBar>

      <Ribbon>
        <Group $w={75}>
          <GroupBody>
            <UndoColumn>
              <UndoRow>
                <UndoIcon />
                <Chevron s={8} c="#777" />
              </UndoRow>
              <UndoRow>
                <RedoIcon />
              </UndoRow>
            </UndoColumn>
          </GroupBody>
          <GroupLabel $pl={4}>Undo</GroupLabel>
        </Group>

        <Group $w={211}>
          <ClipboardBody>
            <PasteColumn>
              <PasteIcon />
              <PasteLabel>Paste</PasteLabel>
              <PasteChevron>
                <Chevron s={9} />
              </PasteChevron>
            </PasteColumn>
            <ClipColumn>
              <ClipItem $off>
                <CutIcon />
                Cut
              </ClipItem>
              <ClipItem $off>
                <CopyIcon />
                Copy
              </ClipItem>
              <ClipItem>
                <BrushIcon />
                Format Painter
              </ClipItem>
            </ClipColumn>
          </ClipboardBody>
          <GroupLabel $pr={22}>Clipboard</GroupLabel>
          <Launcher>
            <LauncherIcon />
          </Launcher>
        </Group>

        <Group $w={386}>
          <GroupBody $pl={10}>
            <ToolRow $top={8}>
              <FontBox $w={155}>
                Calibri (Body)
                <Chevron s={8} />
              </FontBox>
              <FontBox $w={53}>
                11
                <Chevron s={8} />
              </FontBox>
              <Tool $w={27} $size={20}>A<SizeCaret /></Tool>
              <Tool $w={38} $size={17}>A<SizeCaret down /></Tool>
              <ToolSep />
              <Tool $w={28}>Aa</Tool>
              <Tool $w={20}><Chevron s={8} /></Tool>
              <ToolSep />
              <Tool $w={40}><ClearFormat /></Tool>
            </ToolRow>
            <ToolRow $top={9}>
              <Tool $w={30} $bold>B</Tool>
              <Tool $w={36} $italic>I</Tool>
              <Tool $w={26} $line="underline">U</Tool>
              <Tool $w={20}><Chevron s={7} /></Tool>
              <Tool $w={36} $line="line-through">ab</Tool>
              <Tool $w={36} $bold>x<Script>2</Script></Tool>
              <Tool $w={25} $bold>x<Script $up>2</Script></Tool>
              <ToolSep />
              <Tool $w={34}><FontColorA outline /></Tool>
              <Tool $w={12}><Chevron s={7} /></Tool>
              <Tool $w={44}><HighlightIcon /></Tool>
              <Tool $w={10}><Chevron s={7} /></Tool>
              <Tool $w={38}><FontColorA bar="#ff0000" /></Tool>
              <Tool $w={14}><Chevron s={7} /></Tool>
            </ToolRow>
          </GroupBody>
          <GroupLabel $pr={22}>Font</GroupLabel>
          <Launcher>
            <LauncherIcon />
          </Launcher>
        </Group>

        <Group $w={308}>
          <GroupBody $pl={6}>
            <ToolRow $top={8}>
              <Tool $w={33}><BulletLines kind="dot" /></Tool>
              <Tool $w={19}><Chevron s={8} /></Tool>
              <Tool $w={32}><BulletLines kind="num" /></Tool>
              <Tool $w={19}><Chevron s={8} /></Tool>
              <Tool $w={31}><BulletLines kind="multi" /></Tool>
              <Tool $w={24}><Chevron s={8} /></Tool>
              <ToolSep />
              <Tool $w={34}><IndentIcon /></Tool>
              <Tool $w={32}><IndentIcon inward /></Tool>
              <ToolSep />
              <Tool $w={34}><SortIcon /></Tool>
              <ToolSep />
              <Tool $w={32} $size={21} $bold>¶</Tool>
            </ToolRow>
            <ToolRow $top={9}>
              <Tool $w={36}><AlignIcon mode="l" /></Tool>
              <Tool $w={29} $boxed><AlignIcon mode="c" /></Tool>
              <Tool $w={34}><AlignIcon mode="r" /></Tool>
              <Tool $w={33}><AlignIcon mode="j" /></Tool>
              <ToolSep />
              <Tool $w={32}><SpacingIcon /></Tool>
              <Tool $w={12}><Chevron s={8} /></Tool>
              <Spacer $w={10} />
              <ToolSep />
              <Tool $w={34}><ShadingIcon /></Tool>
              <Tool $w={12}><Chevron s={8} /></Tool>
              <Tool $w={36}><BordersIcon /></Tool>
              <Tool $w={18}><Chevron s={8} /></Tool>
            </ToolRow>
          </GroupBody>
          <GroupLabel $pr={22}>Paragraph</GroupLabel>
          <Launcher>
            <LauncherIcon />
          </Launcher>
        </Group>

        <Group $w={722}>
          <GroupBody>
            <Gallery>
              <StyleCard $size={15.5} $focus>Normal</StyleCard>
              <StyleCard $size={15.5}>No Spacing</StyleCard>
              <StyleCard $size={25} $color="#2f5496" $light>Heading 1</StyleCard>
              <StyleCard $size={20.5} $color="#2f5496" $light>Heading 2</StyleCard>
              <StyleCard $size={43} $light>Title</StyleCard>
              <Scroller>
                <ScrollCell>
                  <svg width="10" height="6" viewBox="0 0 10 6" fill="none"><path d="M1 5l4-4 4 4" stroke="#666" strokeWidth="1.5" /></svg>
                </ScrollCell>
                <ScrollCell><Chevron s={9} /></ScrollCell>
                <ScrollCell>
                  <svg width="10" height="9" viewBox="0 0 10 9" fill="none" stroke="#e0e0e0" strokeWidth="1.3"><path d="M0 1h10M1 4l4 4 4-4" /></svg>
                </ScrollCell>
              </Scroller>
            </Gallery>
          </GroupBody>
          <GroupLabel $pr={22}>Styles</GroupLabel>
          <Launcher>
            <LauncherIcon />
          </Launcher>
        </Group>

        <Group $w={115}>
          <EditColumn>
            <EditItem>
              <SearchGlyph c="#ccc" s={20} />
              Find
              <EditChevron $gap={15}><Chevron s={9} /></EditChevron>
            </EditItem>
            <EditItem>
              <ReplaceIcon />
              Replace
            </EditItem>
            <EditItem>
              <CursorIcon />
              Select
              <EditChevron $gap={4}><Chevron s={8} /></EditChevron>
            </EditItem>
          </EditColumn>
          <GroupLabel>Editing</GroupLabel>
        </Group>

        <CollapseButton>
          <Chevron s={13} />
        </CollapseButton>
      </Ribbon>

      <InfoBar>
        <svg width="28" height="28" viewBox="0 0 28 28">
          <circle cx="14" cy="14" r="13" fill="#fff" stroke="#3f93c8" strokeWidth="1.6" />
          <path d="M14 12v10" stroke="#1a86c8" strokeWidth="2.8" />
          <circle cx="14" cy="8" r="1.8" fill="#1a86c8" />
        </svg>
        <InfoBold>GET GENUINE OFFICE</InfoBold>
        <InfoText>Your license isn't genuine, and you may be a victim of software counterfeiting. Avoid interruption and keep your files safe with genuine Office today.</InfoText>
        <InfoButton $w={165}>Get genuine Office</InfoButton>
        <InfoButton $w={116}>Learn more</InfoButton>
        <InfoClose>
          <svg width="10" height="10" viewBox="0 0 10 10" stroke="#555" strokeWidth="2">
            <path d="M1 1l8 8M9 1l-8 8" />
          </svg>
        </InfoClose>
      </InfoBar>

      <Workspace>
        <LeftGutter />
        <DocArea>
          <Shot>
            <ShotTitle>
              <svg width="12" height="10" viewBox="0 0 12 10">
                <rect width="12" height="10" fill="#dde" />
                <rect x="1" y="1" width="6" height="8" fill="#2a6a68" />
              </svg>
              2D Transformation
              <ShotControls>
                <svg width="8" height="8" viewBox="0 0 8 8" stroke="#555"><path d="M0 4.500h8" /></svg>
                <svg width="8" height="8" viewBox="0 0 8 8" fill="none" stroke="#555"><rect x=".5" y="2" width="5" height="5" /><path d="M2 2V.5h5.500V6H6" /></svg>
                <svg width="8" height="8" viewBox="0 0 8 8" stroke="#555"><path d="M.5.5l7 7M7.500.5l-7 7" /></svg>
              </ShotControls>
            </ShotTitle>
            <Canvas>
              <AxisV />
              <AxisH />
              <Plot width="1124" height="580" viewBox="0 0 1124 580" fill="none">
                <path d="M394 203L337 284H551z" stroke="#7c0d0d" strokeWidth="1.3" />
                <circle cx="562" cy="290" r="1.500" fill="#e01010" />
              </Plot>
              <GlutMenu>
                {menuLines.map((line) => (
                  <div key={line}>{line}</div>
                ))}
              </GlutMenu>
            </Canvas>
            <ShotTaskbar>
              <Weather>
                <SunCloud />
                <WeatherText>
                  95°F
                  <br />
                  Partly sunny
                </WeatherText>
              </Weather>
              <ShotIcons>
                {shotIcons.map((it, i) => (
                  <ShotIcon key={i} $run={it.run} $active={it.active}>
                    {it.icon}
                  </ShotIcon>
                ))}
              </ShotIcons>
              <Tray>
                <svg width="9" height="6" viewBox="0 0 10 6" fill="none"><path d="M1 5l4-4 4 4" stroke="#444" strokeWidth="1.3" /></svg>
                <Spacer $w={8} />
                <svg width="13" height="9" viewBox="0 0 13 9" fill="none" stroke="#444"><path d="M3 8.500a2.500 2.500 0 0 1 0-5 3.500 3.500 0 0 1 7 0 2.500 2.500 0 0 1 0 5z" /></svg>
                <TrayLang>ENG<br />IN</TrayLang>
                <WifiIcon c="#444" s={12} />
                <Spacer $w={4} />
                <svg width="12" height="11" viewBox="0 0 12 11" fill="none" stroke="#444"><path d="M1 3.500h2l3-2.500v9L3 7.500H1zM8 3c1 1 1 4 0 5M10 1.500c2 2 2 6 0 8" /></svg>
                <Spacer $w={5} />
                <svg width="12" height="9" viewBox="0 0 12 9"><rect y="1" width="10" height="8" rx="1" fill="#333" /><rect x="10" y="3" width="2" height="3" fill="#333" /></svg>
                <TrayClock>11:49 AM<br />22-09-2022</TrayClock>
                <TrayBadge>12</TrayBadge>
              </Tray>
            </ShotTaskbar>
          </Shot>
        </DocArea>
        <VScroll>
          <svg width="11" height="9" viewBox="0 0 11 9"><path d="M5.500 0L11 9H0z" fill="#999" /></svg>
          <VThumb />
          <VDown>
            <svg width="11" height="9" viewBox="0 0 11 9"><path d="M5.500 9L11 0H0z" fill="#999" /></svg>
          </VDown>
        </VScroll>
      </Workspace>

      <HScroll>
        <svg width="9" height="11" viewBox="0 0 9 11"><path d="M0 5.500L9 0v11z" fill="#999" /></svg>
        <HThumb />
        <HRightArrow>
          <svg width="9" height="11" viewBox="0 0 9 11"><path d="M9 5.500L0 0v11z" fill="#999" /></svg>
        </HRightArrow>
        <ScrollCorner />
      </HScroll>

      <StatusBar>
        <StatusText $w={105}>Page 23 of 23</StatusText>
        <StatusText $w={92}>1387 words</StatusText>
        <BookCross />
        <Spacer $w={21} />
        <StatusText $w={106}>English (India)</StatusText>
        <AccessIcon />
        <Spacer $w={3} />
        <StatusText $w={1104}>Accessibility: Investigate</StatusText>
        <FocusIcon />
        <Spacer $w={5} />
        <StatusText $w={62}>Focus</StatusText>
        <StatusIcon $w={17}><ReadIcon /></StatusIcon>
        <Spacer $w={17} />
        <StatusIcon $w={50} $active><PrintIcon /></StatusIcon>
        <StatusIcon $w={52}><WebIcon /></StatusIcon>
        <Spacer $w={8} />
        <span>−</span>
        <ZoomSlider>
          <ZoomTick />
          <ZoomThumb />
        </ZoomSlider>
        <ZoomPlus>+</ZoomPlus>
        <ZoomValue>200%</ZoomValue>
      </StatusBar>

      <Taskbar>
        <PinnedApps>
          <TaskApp><WinLogo /></TaskApp>
          <TaskApp><EdgeLogo /></TaskApp>
          <TaskApp><StoreLogo /></TaskApp>
          <TaskApp><HexLogo /></TaskApp>
          <TaskApp><FoxLogo /></TaskApp>
          <TaskApp $run><FolderLogo /></TaskApp>
          <TaskApp $run><ChromeLogo /></TaskApp>
          <TaskApp $active><WordLogo s={30} /></TaskApp>
          <TaskApp $run><PaletteLogo /></TaskApp>
        </PinnedApps>
        <MeterBlock $w={102}>↑: 0.22 KB/s<br />↓: 0.52 KB/s</MeterBlock>
        <MeterBlock $w={78}>CPU: 6 %<br />MEM: 39 %</MeterBlock>
        <MeterBlock $w={82}>CPU: 71 °C<br />GPU: 60 °C</MeterBlock>
        <Caret>
          <svg width="14" height="8" viewBox="0 0 14 8" fill="none" stroke="#eee" strokeWidth="1.3"><path d="M1 7l6-6 6 6" /></svg>
        </Caret>
        <Temp>50</Temp>
        <Temp>52</Temp>
        <TrayIconSlot $w={36}><WifiIcon /></TrayIconSlot>
        <TrayIconSlot $w={18}><MuteIcon /></TrayIconSlot>
        <TrayIconSlot $w={46}><BatteryIcon /></TrayIconSlot>
        <ClockBlock>1:46 PM<br />9/22/2022</ClockBlock>
        <NotifyBadge>9</NotifyBadge>
      </Taskbar>
    </Screen>
  );
}
